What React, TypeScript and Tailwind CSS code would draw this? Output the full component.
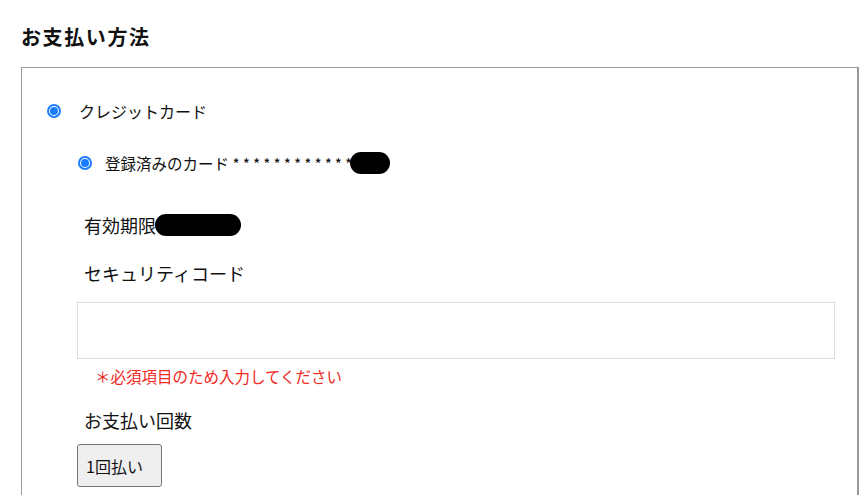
import React from "react";

const jp = { fontFamily: '"Noto Sans CJK JP", "Noto Sans", sans-serif' };

function Radio({ size }: { size: number }) {
  return (
    <span
      className="inline-flex items-center justify-center rounded-full border-2 border-[#1a7dff] bg-white shrink-0"
      style={{ width: size, height: size }}
    >
      <span className="rounded-full bg-[#1a7dff]" style={{ width: size - 6, height: size - 6 }} />
    </span>
  );
}

export default function App() {
  return (
    <div className="bg-white w-[868px] h-[495px] overflow-hidden text-[#111]" style={jp}>
      <div className="pl-[21px] pt-[24px]">
        <h2 className="text-[20px] font-bold leading-[26px] tracking-[1.6px]">お支払い方法</h2>
        <div className="mt-[17px] w-[838px] h-[500px] border border-[#999] border-r-2 pt-[33px]">
          <div className="flex items-center pl-[25px] h-[20px]">
            <Radio size={14} />
            <span className="ml-[18px] text-[16px] leading-[20px]">クレジットカード</span>
          </div>
          <div className="flex items-center pl-[56px] mt-[32px] h-[20px]">
            <Radio size={14} />
            <span className="ml-[13px] text-[15.5px] leading-[20px]">
              登録済みのカード <span className="tracking-[3px]">************</span>
            </span>
            <span className="ml-[-5px] inline-block w-[40px] h-[22px] rounded-full bg-black" />
          </div>
          <div className="flex items-center pl-[62px] mt-[41px] h-[22px]">
            <span className="text-[18px] leading-[22px]">有効期限</span>
            <span className="ml-[-1px] inline-block w-[86px] h-[22px] rounded-full bg-black" />
          </div>
          <div className="pl-[62px] mt-[26px] text-[18px] leading-[22px]">セキュリティコード</div>
          <div className="ml-[55px] mt-[18px] w-[758px] h-[57px] border border-[#ddd] bg-white" />
          <div className="pl-[73px] mt-[7px] text-[15.5px] leading-[20px] text-[#f0281e]">＊必須項目のため入力してください</div>
          <div className="pl-[62px] mt-[23px] text-[18px] leading-[22px]">お支払い回数</div>
          <button
            className="ml-[55px] mt-[13px] w-[85px] h-[43px] rounded-[3px] border border-[#767676] bg-[#efefef] text-left pl-[8px] text-[16px]"
            style={jp}
          >
            1回払い
          </button>
        </div>
      </div>
    </div>
  );
}
